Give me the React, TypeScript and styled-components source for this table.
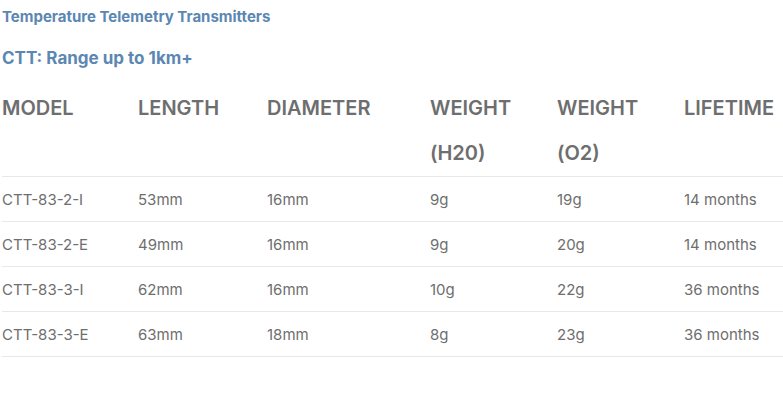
import React from 'react';
import styled, { createGlobalStyle } from 'styled-components';

const GlobalStyle = createGlobalStyle`
  body {
    margin: 0;
    background: #fff;
    font-family: Inter, "Noto Sans", sans-serif;
  }
`;

const Page = styled.div`
  padding: 0 0 0 2px;
`;

const Title = styled.div`
  color: #5b87b2;
  font-size: 15px;
  font-weight: 700;
  line-height: 20px;
  padding-top: 7px;
`;

const Subtitle = styled.h2`
  margin: 21px 0 0;
  color: #5b87b2;
  font-size: 17px;
  font-weight: 700;
  line-height: 20px;
`;

const Table = styled.table`
  width: 100%;
  margin-top: 18px;
  border-collapse: collapse;
  table-layout: fixed;
`;

const Th = styled.th`
  text-align: left;
  vertical-align: top;
  padding: 0 10px 0 0;
  color: #6e6e6e;
  font-size: 20px;
  font-weight: 600;
  line-height: 45px;
  border-bottom: 1px solid #e8e8e8;
`;

const Td = styled.td`
  padding: 0;
  height: 44px;
  color: #6e6e6e;
  font-size: 15px;
  font-weight: 400;
  border-bottom: 1px solid #e8e8e8;
`;

const widths = [136, 129, 163, 127, 127];

const headers = ['MODEL', 'LENGTH', 'DIAMETER', 'WEIGHT (H20)', 'WEIGHT (O2)', 'LIFETIME'];

const rows = [
  ['CTT-83-2-I', '53mm', '16mm', '9g', '19g', '14 months'],
  ['CTT-83-2-E', '49mm', '16mm', '9g', '20g', '14 months'],
  ['CTT-83-3-I', '62mm', '16mm', '10g', '22g', '36 months'],
  ['CTT-83-3-E', '63mm', '18mm', '8g', '23g', '36 months'],
];

export default function App() {
  return (
    <>
      <GlobalStyle />
      <Page>
        <Title>Temperature Telemetry Transmitters</Title>
        <Subtitle>CTT: Range up to 1km+</Subtitle>
        <Table>
          <colgroup>
            {widths.map((w, i) => (
              <col key={i} style={{ width: w }} />
            ))}
            <col />
          </colgroup>
          <thead>
            <tr>
              {headers.map((h) => (
                <Th key={h}>{h}</Th>
              ))}
            </tr>
          </thead>
          <tbody>
            {rows.map((r) => (
              <tr key={r[0]}>
                {r.map((c, i) => (
                  <Td key={i}>{c}</Td>
                ))}
              </tr>
            ))}
          </tbody>
        </Table>
      </Page>
    </>
  );
}
